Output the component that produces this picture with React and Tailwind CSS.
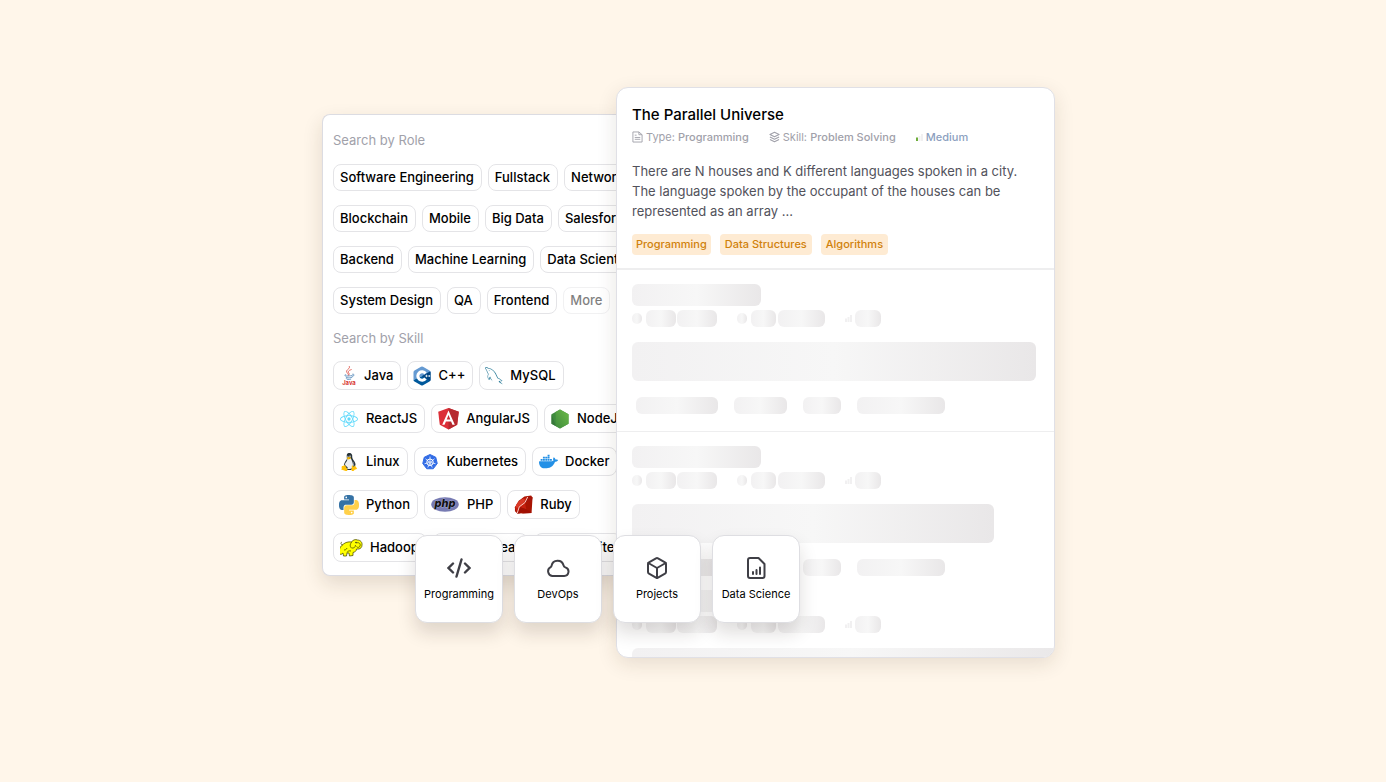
import { Box } from 'lucide-react'
import { FcLinux } from 'react-icons/fc'
import { SiApachespark, SiDocker, SiReact, SiSqlite } from 'react-icons/si'
import { GrMysql } from 'react-icons/gr'

function JavaLogo() {
  return (
    <svg viewBox="0 0 32 44" width="15" height="20" aria-hidden="true">
      <g fill="none" stroke="#e0584f" strokeWidth="2" strokeLinecap="round">
        <path d="M18 1c3 5-8 7-6 12 1 3 4 4 4 7" />
        <path d="M22 8c-6 2-8 4-5 8 1 2 0 3-1 4" />
      </g>
      <g fill="none" stroke="#4e86b8" strokeWidth="1.8" strokeLinecap="round">
        <path d="M10 19c-5 2-2 3 5 3 4 0 7-1 9-1M25 18c5-1 4 4-1 6" />
        <path d="M10 24c-2 2 9 3 13 1M11 28c0 2 7 2 10 1" />
      </g>
      <text x="2" y="42" fill="#d93a34" fontSize="13" fontWeight="700" fontFamily="Inter, sans-serif">
        Java
      </text>
    </svg>
  )
}

function CppLogo() {
  return (
    <svg viewBox="0 0 36 40" width="18" height="20" aria-hidden="true">
      <path d="M16 1.5a4 4 0 0 1 4 0l13 7.5a4 4 0 0 1 2 3.5L1 28V12.5A4 4 0 0 1 3 9z" fill="#659ad2" />
      <path d="M35 12.5v15a4 4 0 0 1-2 3.5l-13 7.5a4 4 0 0 1-4 0L3 31a4 4 0 0 1-2-3z" fill="#00599c" />
      <path d="M18 20 34.5 10.5l.5 2v15l-.8 2.5z" fill="#004482" />
      <path d="M25 15A8.5 8.5 0 1 0 25 25" fill="none" stroke="#fff" strokeWidth="6" />
      <path d="M24.500 20h5M27 17.500v5M30.500 20h4M32.500 18v4" stroke="#fff" strokeWidth="1.5" />
    </svg>
  )
}

function AngularLogo() {
  return (
    <svg viewBox="0 0 250 250" width="25" height="25" aria-hidden="true">
      <path fill="#dc2f38" d="M125 20 22 57l16 130 87 48 87-48 16-130z" />
      <path fill="#b62a30" d="M125 20v215l87-48 16-130z" />
      <path fill="#fff" d="m125 44-63 143h24l13-32h52l13 32h24zm18 91h-36l18-45z" />
    </svg>
  )
}

function NodeLogo() {
  return (
    <svg viewBox="0 0 36 40" width="18" height="20" aria-hidden="true">
      <defs>
        <linearGradient id="node-face" x1="1" y1="0" x2="0" y2="1">
          <stop offset="0" stopColor="#6cba48" />
          <stop offset="1" stopColor="#3f8b3d" />
        </linearGradient>
      </defs>
      <path d="M18 1 35 10.500v19L18 39 1 29.500v-19z" fill="#3f8b3d" />
      <path d="M1 10.500 10 34.500 1 29.500z" fill="#37783a" />
      <path d="m10 34.500 8 4.500 17-9.500v-19L18 1 9 6z" fill="url(#node-face)" />
    </svg>
  )
}

function KubernetesLogo() {
  return (
    <svg viewBox="0 0 32 32" width="16" height="16" aria-hidden="true">
      <path
        d="m16 1 11.500 5.500L30.500 19l-8 10.500h-13L1.500 19l3-12.500z"
        fill="#326ce5"
        stroke="#326ce5"
        strokeWidth="2"
        strokeLinejoin="round"
      />
      <g fill="none" stroke="#fff" strokeWidth="1.5">
        <circle cx="16" cy="16.500" r="6.500" strokeWidth="2" />
        <circle cx="16" cy="16.500" r="1.500" />
        <path d="M16 5v10M16 18l-4.500 9M16 18l4.500 9M14.500 16 7 9.500M17.500 16 25 9.500M14.500 17 5 19.500M17.500 17l9.500 2.500" />
      </g>
    </svg>
  )
}

function PythonLogo() {
  return (
    <svg viewBox="0 0 24 24" width="20" height="20" aria-hidden="true">
      <path
        fill="#3572a5"
        d="M14.25.18l.9.2.73.26.59.3.45.32.34.34.25.34.16.33.1.3.04.26.02.2-.01.13V8.5l-.05.63-.13.55-.21.46-.26.38-.3.31-.33.25-.35.19-.35.14-.33.1-.3.07-.26.04-.21.02H8.77l-.69.05-.59.14-.5.22-.41.27-.33.32-.27.35-.2.36-.15.37-.1.35-.07.32-.04.27-.02.21v3.06H3.17l-.21-.03-.28-.07-.32-.12-.35-.18-.36-.26-.36-.36-.35-.46-.32-.59-.28-.73-.21-.88-.14-1.05-.05-1.23.06-1.22.16-1.04.24-.87.32-.71.36-.57.4-.44.42-.33.42-.24.4-.16.36-.1.32-.05.24-.01h.16l.06.01h8.16v-.83H6.18l-.01-2.75-.02-.37.05-.34.11-.31.17-.28.25-.26.31-.23.38-.2.44-.18.51-.15.58-.12.64-.1.71-.06.77-.04.84-.02 1.27.05z"
      />
      <path
        fill="#ffd04a"
        d="M21.04 6.11l.28.06.32.12.35.18.36.27.36.35.35.47.32.59.28.73.21.88.14 1.04.05 1.23-.06 1.23-.16 1.04-.24.86-.32.71-.36.57-.4.45-.42.33-.42.24-.4.16-.36.09-.32.05-.24.02-.16-.01h-8.22v.82h5.84l.01 2.76.02.36-.05.34-.11.31-.17.29-.25.25-.31.24-.38.2-.44.17-.51.15-.58.13-.64.09-.71.07-.77.04-.84.01-1.27-.04-1.07-.14-.9-.2-.73-.25-.59-.3-.45-.33-.34-.34-.25-.34-.16-.33-.1-.3-.04-.25-.02-.2.01-.13v-5.34l.05-.64.13-.54.21-.46.26-.38.3-.32.33-.24.35-.2.35-.14.33-.1.3-.06.26-.04.21-.02.13-.01h5.84l.69-.05.59-.14.5-.21.41-.28.33-.32.27-.35.2-.36.15-.36.1-.35.07-.32.04-.28.02-.21V6.07h2.09l.14.01z"
      />
      <circle cx="8.700" cy="2.900" r="1" fill="#fff" />
      <circle cx="15.200" cy="21.100" r="1" fill="#fff" />
    </svg>
  )
}

function PhpLogo() {
  return (
    <svg viewBox="0 0 56 30" width="28" height="15" aria-hidden="true">
      <ellipse cx="28" cy="15" rx="27.500" ry="14.500" fill="#777bb3" />
      <text
        x="28"
        y="20"
        textAnchor="middle"
        fontFamily="Inter, sans-serif"
        fontSize="22"
        fontStyle="italic"
        fontWeight="800"
        fill="#111"
        stroke="#c9cbe6"
        strokeWidth="1"
        paintOrder="stroke"
      >
        php
      </text>
    </svg>
  )
}

function RubyLogo() {
  return (
    <svg viewBox="0 0 40 40" width="19" height="19" aria-hidden="true">
      <path d="M2 26 10 12 22 3 36 1l3 4-2 33-30 1-5-5z" fill="#a81402" />
      <path d="M2 26 7 39l4-14 15 5-3-14 14-2-9-10-8 3-9 6z" fill="#c61f0e" />
      <path d="m11 25 15 5-15 9H7zM26 30l11 8-20 1z" fill="#a01004" />
      <path d="M29 3 23 16l14-2 2-9z" fill="#a51409" />
      <path d="M4 26c-2-5 8-16 15-18 6-1 4 8-1 12S6 29 4 26z" fill="#d93a28" />
      <path d="M11 25 7 38M11 25 23 16 29 4" stroke="#fbd4ce" strokeWidth="2" fill="none" />
    </svg>
  )
}

function HadoopLogo() {
  return (
    <svg viewBox="0 0 46 36" width="23" height="18" aria-hidden="true">
      <g fill="#ff0" stroke="#4a4a00" strokeWidth="1.5" strokeLinejoin="round">
        <path d="M7 10c4-3 9-5 16-4 2-4 8-6 12-4 6 0 10 5 9 10 0 5-3 7-6 8l-5 0c0 4-3 6-7 7l0 6-7 1-1-6-4 0-1 6-6 0-1-6-4 3-4-2c0-9 2-14 9-19z" />
        <path d="M24 6c-4 3-5 9-1 12 5 1 8-2 8-6M33 8c4-2 9 1 7 6-1 3-5 4-7 1" />
        <path d="M6 12C1 12 1 7 4 6M8 22c3 0 5-1 6-4M14 27c1-3 5-4 8-3" fill="none" />
      </g>
      <circle cx="32" cy="7" r="1.500" fill="#222" />
    </svg>
  )
}

function CodeIcon() {
  return (
    <svg viewBox="0 0 24 24" width="24" height="24" fill="none" stroke="#3f3f46" strokeWidth="2.4" aria-hidden="true">
      <path d="M6 7.500 1.500 12 6 16.500M18 7.500l4.500 4.500-4.500 4.500M14.500 3.500 9.500 20.500" strokeLinecap="round" />
    </svg>
  )
}

function CloudIcon() {
  return (
    <svg
      viewBox="0 0 24 24"
      width="24"
      height="24"
      fill="none"
      stroke="#3f3f46"
      strokeWidth="2"
      strokeLinejoin="round"
      aria-hidden="true"
    >
      <path d="M6.200 20h12a4.400 4.400 0 0 0 1.200-8.600 3 3 0 0 1-1.900-2.200 6.100 6.100 0 0 0-11.900.4c-.1.700-.4 1.200-1 1.600A4.700 4.700 0 0 0 6.200 20z" />
    </svg>
  )
}

function ReportIcon() {
  return (
    <svg
      viewBox="0 0 24 24"
      width="24"
      height="24"
      fill="none"
      stroke="#3f3f46"
      strokeWidth="2"
      strokeLinecap="round"
      strokeLinejoin="round"
      aria-hidden="true"
    >
      <path d="M14.500 2H6a2 2 0 0 0-2 2v16a2 2 0 0 0 2 2h12.500a2 2 0 0 0 2-2V8z" />
      <path d="M9 18v-2M12.500 18v-4M16 18v-6.500" />
    </svg>
  )
}

function TypeIcon() {
  return (
    <svg viewBox="0 0 12 12" width="11" height="12" fill="none" stroke="#a1a1aa" strokeLinejoin="round" aria-hidden="true">
      <path d="M1 .5h6.500l3.500 3v8H1zM7.500.5v3H11M3 4h2M3 6.500h6M3 8.500h6" />
    </svg>
  )
}

function SkillIcon() {
  return (
    <svg
      viewBox="0 0 12 12"
      width="11"
      height="12"
      fill="none"
      stroke="#a1a1aa"
      strokeWidth="1.1"
      strokeLinejoin="round"
      aria-hidden="true"
    >
      <path d="m6 .8 5 2.500-5 2.500-5-2.500zM1 6l5 2.500L11 6M1 8.700l5 2.500 5-2.500" />
    </svg>
  )
}

function LevelIcon({ first = '#f1f0f1' }) {
  return (
    <svg viewBox="0 0 7 7" width="7" height="7" aria-hidden="true">
      <path d="M0 3.500h2V7H0z" fill={first} />
      <path d="M2.500 2h2v5h-2zM5 0h2v7H5z" fill="#f1f0f1" />
    </svg>
  )
}

const roleRows = [
  ['Software Engineering', 'Fullstack', 'Network Engineer'],
  ['Blockchain', 'Mobile', 'Big Data', 'Salesforce'],
  ['Backend', 'Machine Learning', 'Data Scientist'],
  ['System Design', 'QA', 'Frontend', 'More'],
]

const skillRows = [
  [
    { name: 'Java', icon: <JavaLogo />, box: 'w-4' },
    { name: 'C++', icon: <CppLogo />, box: 'w-4' },
    { name: 'MySQL', icon: <GrMysql size={18} color="#2d7d9a" />, box: 'w-4' },
  ],
  [
    { name: 'ReactJS', icon: <SiReact size={18} color="#61dafb" />, box: 'w-[18px]' },
    { name: 'AngularJS', icon: <AngularLogo />, box: 'w-5' },
    { name: 'NodeJS', icon: <NodeLogo />, box: 'w-[18px]' },
  ],
  [
    { name: 'Linux', icon: <FcLinux size={24} />, box: 'w-[18px]' },
    { name: 'Kubernetes', icon: <KubernetesLogo />, box: 'w-[18px]' },
    { name: 'Docker', icon: <SiDocker size={19} color="#2390e6" />, box: 'w-[18px]' },
  ],
  [
    { name: 'Python', icon: <PythonLogo />, box: 'w-[18px]' },
    { name: 'PHP', icon: <PhpLogo />, box: 'w-7' },
    { name: 'Ruby', icon: <RubyLogo />, box: 'w-[18px]' },
  ],
  [
    { name: 'Hadoop', icon: <HadoopLogo />, box: 'w-[22px]' },
    { name: 'Nuclear', icon: <SiApachespark size={16} />, box: 'w-6' },
    { name: 'SQLite', icon: <SiSqlite size={16} />, box: 'w-6' },
  ],
]

const categories = [
  { name: 'Programming', icon: <CodeIcon /> },
  { name: 'DevOps', icon: <CloudIcon /> },
  { name: 'Projects', icon: <Box size={24} color="#3f3f46" /> },
  { name: 'Data Science', icon: <ReportIcon /> },
]

function Bone({ className }) {
  return <div className={`shrink-0 bg-linear-to-r from-[#f2f1f2] via-[#f7f7f7] to-[#e9e7e8] ${className}`} />
}

function SkeletonItem({ blockWidth, className = '' }) {
  return (
    <div className={`pl-[15px] pt-[14px] ${className}`}>
      <Bone className="h-[22px] w-[129px] rounded-md" />
      <div className="mt-1 flex h-[17px] items-center">
        <Bone className="h-[11px] w-[10px] rounded-full" />
        <Bone className="ml-1 h-[17px] w-[30px] rounded-md" />
        <Bone className="ml-px h-[17px] w-[40px] rounded-md" />
        <Bone className="ml-5 h-[11px] w-[10px] rounded-full" />
        <Bone className="ml-1 h-[17px] w-[25px] rounded-md" />
        <Bone className="ml-[2px] h-[17px] w-[47px] rounded-md" />
        <span className="ml-5 mr-[3px]">
          <LevelIcon />
        </span>
        <Bone className="h-[17px] w-[26px] rounded-md" />
      </div>
      <Bone className={`mt-[15px] h-[39px] rounded-md ${blockWidth}`} />
      <div className="mt-4 flex gap-4 pl-1">
        <Bone className="h-[17px] w-[82px] rounded-md" />
        <Bone className="h-[17px] w-[53px] rounded-md" />
        <Bone className="h-[17px] w-[38px] rounded-md" />
        <Bone className="h-[17px] w-[88px] rounded-md" />
      </div>
    </div>
  )
}

function SearchPanel() {
  return (
    <section className="mt-[27px] h-[462px] min-w-0 flex-1 overflow-hidden rounded-l-lg border border-r-0 border-[#dcdce2] bg-white pl-[10px] pt-[15px] shadow-[0_8px_20px_rgba(60,40,20,0.14)]">
      <h2 className="text-[13px] leading-5 text-[#a1a1aa]">Search by Role</h2>
      <div className="mt-[14px] flex flex-col gap-[14px]">
        {roleRows.map((row) => (
          <div key={row[0]} className="flex gap-[6px]">
            {row.map((role) => (
              <button
                key={role}
                type="button"
                className={`h-[27px] shrink-0 whitespace-nowrap rounded-lg border border-[#e4e4e7] pl-[6px] pr-[7px] text-[13px] font-medium ${
                  role === 'More' ? 'opacity-50' : ''
                }`}
              >
                {role}
              </button>
            ))}
          </div>
        ))}
      </div>

      <h2 className="mt-[14px] text-[13px] leading-5 text-[#a1a1aa]">Search by Skill</h2>
      <div className="mt-[13px] flex flex-col gap-[14px]">
        {skillRows.map((row) => (
          <div key={row[0].name} className="flex gap-[6px]">
            {row.map((skill) => (
              <button
                key={skill.name}
                type="button"
                className="flex h-[29px] shrink-0 items-center gap-2 whitespace-nowrap rounded-lg border border-[#e4e4e7] pl-[6px] pr-[7px] text-[13px] font-medium"
              >
                <span className={`flex items-center justify-center [&>svg]:shrink-0 ${skill.box}`}>{skill.icon}</span>
                {skill.name}
              </button>
            ))}
          </div>
        ))}
      </div>
    </section>
  )
}

function ProblemCard() {
  return (
    <section className="relative h-[571px] w-[439px] shrink-0 overflow-hidden rounded-xl border border-[#e0e0e6] bg-white shadow-[0_6px_20px_rgba(60,40,20,0.12)]">
      <div className="border-b-2 border-[#eeeeef] px-[15px] pb-[13px] pt-4">
        <h1 className="text-[15px] font-medium leading-[22px]">The Parallel Universe</h1>
        <div className="mt-[3px] flex items-center text-[11px] leading-4 text-[#a1a1aa]">
          <TypeIcon />
          <span className="ml-[3px]">
            Type: <span className="font-medium">Programming</span>
          </span>
          <span className="ml-5 flex items-center">
            <SkillIcon />
            <span className="ml-[3px]">
              Skill: <span className="font-medium">Problem Solving</span>
            </span>
          </span>
          <span className="ml-5 flex items-center gap-[3px] font-medium text-[#8c9fc0]">
            <LevelIcon first="#6fae3c" />
            Medium
          </span>
        </div>
        <p className="mt-4 text-[13px] leading-5 text-[#52525b]">
          There are N houses and K different languages spoken in a city. The language spoken by the occupant of the
          houses can be represented as an array ...
        </p>
        <div className="mt-[13px] flex gap-[9px] text-[11px] font-medium leading-[21px] text-[#d0810b]">
          <span className="rounded bg-[#feebd3] px-1">Programming</span>
          <span className="rounded bg-[#feebd3] px-[5px]">Data Structures</span>
          <span className="rounded bg-[#feebd3] px-[5px]">Algorithms</span>
        </div>
      </div>
      <SkeletonItem blockWidth="w-[404px]" className="border-b border-[#eeeeef] pb-[17px]" />
      <SkeletonItem blockWidth="w-[362px]" />
      <SkeletonItem blockWidth="w-[440px]" />
    </section>
  )
}

export default function App() {
  return (
    <main className="min-h-screen bg-[#fff6ea] px-4 pb-10 pt-[87px] font-['Inter',sans-serif] text-black">
      <div className="relative mx-auto max-w-[742px] pr-[9px]">
        <div className="flex">
          <SearchPanel />
          <ProblemCard />
        </div>
        {/* Category tiles sit on top of both panels */}
        <nav className="absolute left-[93px] top-[448px] flex gap-[11px]">
          {categories.map((category) => (
            <button
              key={category.name}
              type="button"
              className="flex h-[88px] w-[88px] flex-col items-center justify-center gap-[6px] whitespace-nowrap rounded-xl border border-[#dedee2] bg-white text-[11px] leading-4 shadow-[0_10px_18px_rgba(40,30,20,0.15)]"
            >
              {category.icon}
              {category.name}
            </button>
          ))}
        </nav>
      </div>
    </main>
  )
}
